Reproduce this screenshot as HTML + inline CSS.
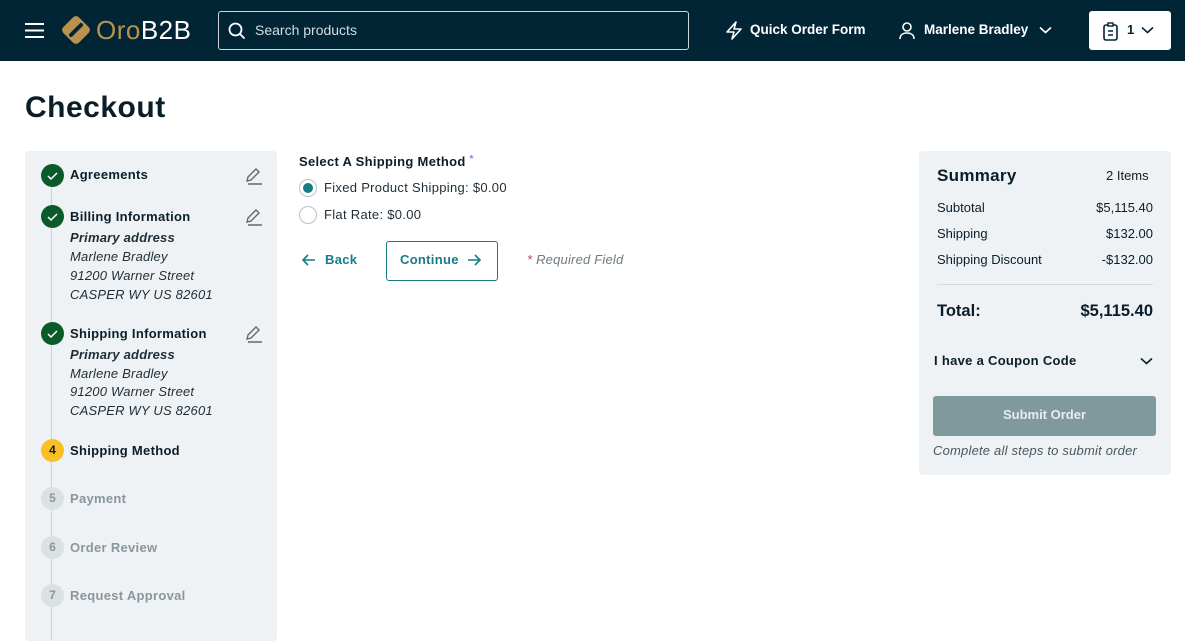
<!DOCTYPE html>
<html><head><meta charset="utf-8"><style>
*{margin:0;padding:0;box-sizing:border-box}
body{width:1185px;height:632px;overflow:hidden;background:#fff;font-family:"Liberation Sans",sans-serif;color:#0a1e2a;position:relative}
.a{position:absolute;white-space:nowrap}
.hdr{position:absolute;left:0;top:0;width:1185px;height:61px;background:#022536}
.b{font-weight:bold}
.circ{position:absolute;width:23px;height:23px;border-radius:50%;left:41px;font-size:12px;font-weight:bold;text-align:center;line-height:23px}
.g{background:#0b5b2a}
.it{font-style:italic;font-size:13px;color:#1f2d36;letter-spacing:0.2px}
.gray{color:#8a969e}
.row{position:absolute;left:937px;width:216px;font-size:13px;display:flex;justify-content:space-between}
.s13{font-size:13px;letter-spacing:0.3px}
</style></head><body>
<div class="hdr">
<svg class="a" style="left:24px;top:22px" width="21" height="17"><path d="M1 2h19M1 8.5h19M1 15h19" stroke="#fff" stroke-width="2"/></svg>
<svg class="a" style="left:60px;top:14px" width="32" height="32" viewBox="0 0 32 32"><rect x="5" y="5" width="22" height="22" rx="4" transform="rotate(45 16 16)" fill="#b8924e"/><path d="M11 21L21 11" stroke="#022536" stroke-width="4" stroke-linecap="round"/></svg>
<div class="a" style="left:96px;top:15px;font-size:26px;color:#b8924e;letter-spacing:0.5px">Oro<span style="color:#fff">B2B</span></div>
<div class="a" style="left:218px;top:11px;width:471px;height:39px;border:1px solid #cfd6da;border-radius:3px"></div>
<svg class="a" style="left:228px;top:22px" width="18" height="18"><circle cx="7.5" cy="7.5" r="6" stroke="#fff" stroke-width="1.8" fill="none"/><path d="M12 12l4.5 4.5" stroke="#fff" stroke-width="1.8"/></svg>
<div class="a" style="left:255px;top:22px;font-size:14px;color:#d4dde2">Search products</div>
<svg class="a" style="left:725px;top:21px" width="18" height="19"><path d="M11 1L2 11h7l-2 7 9-10H9z" stroke="#fff" stroke-width="1.6" fill="none" stroke-linejoin="round"/></svg>
<div class="a b" style="left:750px;top:22px;font-size:13.5px;color:#fff">Quick Order Form</div>
<svg class="a" style="left:898px;top:21px" width="18" height="19"><circle cx="9" cy="6" r="4" stroke="#fff" stroke-width="1.6" fill="none"/><path d="M2 18c0-4 3-6 7-6s7 2 7 6" stroke="#fff" stroke-width="1.6" fill="none"/></svg>
<div class="a b" style="left:924px;top:22px;font-size:13.5px;color:#fff">Marlene Bradley</div>
<svg class="a" style="left:1039px;top:26px" width="13" height="9"><path d="M1 1.5l5.5 5 5.5-5" stroke="#fff" stroke-width="1.6" fill="none"/></svg>
<div class="a" style="left:1089px;top:11px;width:82px;height:39px;background:#fff;border-radius:3px"></div>
<svg class="a" style="left:1102px;top:22px" width="18" height="19"><rect x="2" y="3" width="13" height="15" rx="2" stroke="#022536" stroke-width="1.6" fill="none"/><rect x="6" y="1" width="5" height="3" stroke="#022536" stroke-width="1.4" fill="#fff"/><path d="M6 9h5M6 13h5" stroke="#022536" stroke-width="1.5"/></svg>
<div class="a b" style="left:1127px;top:22px;font-size:13px;color:#022536">1</div>
<svg class="a" style="left:1141px;top:26px" width="13" height="9"><path d="M1 1.5l5.5 5 5.5-5" stroke="#022536" stroke-width="1.6" fill="none"/></svg>
</div>
<div class="a b" style="left:25px;top:91px;font-size:30px;letter-spacing:0.5px;color:#0a1e2a">Checkout</div>

<div class="a" style="left:25px;top:151px;width:252px;height:490px;background:#eff2f5;border-radius:4px"></div>
<div class="a" style="left:51px;top:180px;width:1px;height:460px;background:#cdd3d7"></div>
<div class="circ g" style="top:164px"></div><div class="circ g" style="top:205px"></div><div class="circ g" style="top:322px"></div>
<svg class="a" style="left:41px;top:164px" width="23" height="23"><path d="M7 12l3 3 6-6" stroke="#fff" stroke-width="1.5" fill="none"/></svg>
<svg class="a" style="left:41px;top:205px" width="23" height="23"><path d="M7 12l3 3 6-6" stroke="#fff" stroke-width="1.5" fill="none"/></svg>
<svg class="a" style="left:41px;top:322px" width="23" height="23"><path d="M7 12l3 3 6-6" stroke="#fff" stroke-width="1.5" fill="none"/></svg>
<div class="a b s13" style="left:70px;top:167px">Agreements</div>
<div class="a b s13" style="left:70px;top:209px">Billing Information</div>
<div class="a it b" style="left:70px;top:230px">Primary address</div>
<div class="a it" style="left:70px;top:249px">Marlene Bradley</div>
<div class="a it" style="left:70px;top:268px">91200 Warner Street</div>
<div class="a it" style="left:70px;top:287px">CASPER WY US 82601</div>
<div class="a b s13" style="left:70px;top:326px">Shipping Information</div>
<div class="a it b" style="left:70px;top:347px">Primary address</div>
<div class="a it" style="left:70px;top:366px">Marlene Bradley</div>
<div class="a it" style="left:70px;top:384px">91200 Warner Street</div>
<div class="a it" style="left:70px;top:403px">CASPER WY US 82601</div>
<svg class="a" style="left:245px;top:167px" width="18" height="18"><path d="M2 14l1-4 8-8 3 3-8 8z M3 17h14" stroke="#5d6b74" stroke-width="1.4" fill="none"/></svg>
<svg class="a" style="left:245px;top:208px" width="18" height="18"><path d="M2 14l1-4 8-8 3 3-8 8z M3 17h14" stroke="#5d6b74" stroke-width="1.4" fill="none"/></svg>
<svg class="a" style="left:245px;top:325px" width="18" height="18"><path d="M2 14l1-4 8-8 3 3-8 8z M3 17h14" stroke="#5d6b74" stroke-width="1.4" fill="none"/></svg>
<div class="circ" style="top:439px;background:#fbbf24;color:#0a1e2a">4</div>
<div class="a b s13" style="left:70px;top:443px">Shipping Method</div>
<div class="circ" style="top:487px;background:#dbe0e3;color:#8a969e">5</div>
<div class="a b gray s13" style="left:70px;top:491px">Payment</div>
<div class="circ" style="top:536px;background:#dbe0e3;color:#8a969e">6</div>
<div class="a b gray s13" style="left:70px;top:540px">Order Review</div>
<div class="circ" style="top:584px;background:#dbe0e3;color:#8a969e">7</div>
<div class="a b gray s13" style="left:70px;top:588px">Request Approval</div>

<div class="a b s13" style="left:299px;top:154px">Select A Shipping Method <span style="color:#7a8fc2;font-size:10px;vertical-align:top">*</span></div>
<div class="a" style="left:299px;top:179px;width:18px;height:18px;border-radius:50%;border:1px solid #b8c2c8"></div>
<div class="a" style="left:303px;top:183px;width:10px;height:10px;border-radius:50%;background:#167c86"></div>
<div class="a s13" style="left:324px;top:180px;color:#1f2d36">Fixed Product Shipping: $0.00</div>
<div class="a" style="left:299px;top:206px;width:18px;height:18px;border-radius:50%;border:1px solid #b8c2c8"></div>
<div class="a s13" style="left:324px;top:207px;color:#1f2d36">Flat Rate: $0.00</div>
<svg class="a" style="left:301px;top:253px" width="15" height="14"><path d="M14 7H2M7 2L2 7l5 5" stroke="#167c86" stroke-width="1.6" fill="none"/></svg>
<div class="a b s13" style="left:325px;top:252px;color:#167c86">Back</div>
<div class="a" style="left:386px;top:241px;width:112px;height:40px;border:1px solid #167c86;border-radius:3px"></div>
<div class="a b s13" style="left:400px;top:252px;color:#167c86">Continue</div>
<svg class="a" style="left:467px;top:253px" width="15" height="14"><path d="M1 7h12M8 2l5 5-5 5" stroke="#167c86" stroke-width="1.6" fill="none"/></svg>
<div class="a it" style="left:527px;top:252px;color:#6e7a82"><span style="color:#b2475a">*</span> Required Field</div>

<div class="a" style="left:919px;top:151px;width:252px;height:324px;background:#eff2f5;border-radius:4px"></div>
<div class="a b" style="left:937px;top:166px;font-size:17px;letter-spacing:0.3px">Summary</div>
<div class="a" style="left:1106px;top:168px;font-size:13px">2 Items</div>
<div class="row" style="top:200px"><span>Subtotal</span><span>$5,115.40</span></div>
<div class="row" style="top:226px"><span>Shipping</span><span>$132.00</span></div>
<div class="row" style="top:252px"><span>Shipping Discount</span><span>-$132.00</span></div>
<div class="a" style="left:937px;top:284px;width:216px;height:1px;background:#d3d9dd"></div>
<div class="row b" style="top:302px;font-size:16.5px"><span>Total:</span><span>$5,115.40</span></div>
<div class="a b s13" style="left:934px;top:353px">I have a Coupon Code</div>
<svg class="a" style="left:1140px;top:357px" width="13" height="9"><path d="M1 1.5l5.5 5 5.5-5" stroke="#0a1e2a" stroke-width="1.6" fill="none"/></svg>
<div class="a b" style="left:933px;top:396px;width:223px;height:40px;background:#7f999c;border-radius:3px;color:#e6eeef;font-size:13px;text-align:center;line-height:38px">Submit Order</div>
<div class="a it" style="left:933px;top:443px;color:#4a5760">Complete all steps to submit order</div>
</body></html>
